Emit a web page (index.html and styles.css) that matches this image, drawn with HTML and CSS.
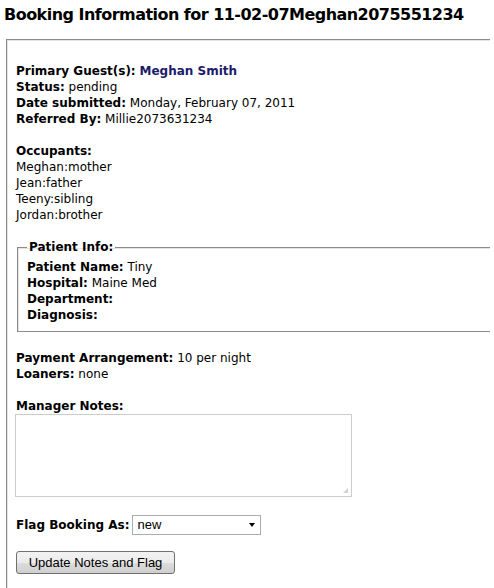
FILE: index.html
```html
<!DOCTYPE html>
<html>
<head>
<meta charset="utf-8">
<link rel="stylesheet" href="styles.css">
</head>
<body>
<h2 class="title">Booking Information for 11-02-07Meghan2075551234</h2>
<form class="booking">
  <fieldset class="outer">
    <div class="block">
      <div><b>Primary Guest(s):</b> <b class="guest">Meghan Smith</b></div>
      <div><b>Status:</b> pending</div>
      <div><b>Date submitted:</b> Monday, February 07, 2011</div>
      <div><b>Referred By:</b> Millie2073631234</div>
    </div>
    <div class="block">
      <div><b>Occupants:</b></div>
      <div>Meghan:mother</div>
      <div>Jean:father</div>
      <div>Teeny:sibling</div>
      <div>Jordan:brother</div>
    </div>
    <fieldset class="inner">
      <legend>Patient Info:</legend>
      <div><b>Patient Name:</b> Tiny</div>
      <div><b>Hospital:</b> Maine Med</div>
      <div><b>Department:</b></div>
      <div><b>Diagnosis:</b></div>
    </fieldset>
    <div class="block">
      <div><b>Payment Arrangement:</b> 10 per night</div>
      <div><b>Loaners:</b> none</div>
    </div>
    <div class="notes">
      <div><b>Manager Notes:</b></div>
      <div class="ta"></div>
    </div>
    <div class="flag">
      <b>Flag Booking As:</b>
      <div class="select"><span>new</span><span class="arrow"></span></div>
    </div>
    <div class="btn">Update Notes and Flag</div>
  </fieldset>
</form>
</body>
</html>
```
FILE: styles.css
```css
html { overflow: hidden; }
body {
  margin: 0 4px;
  font-family: "DejaVu Sans", Verdana, sans-serif;
  font-size: 12px;
  line-height: 16px;
  color: #000;
  background: #fff;
}
.title {
  margin: 0;
  padding-top: 5px;
  font-size: 16px;
  line-height: 19px;
  font-weight: bold;
  letter-spacing: -0.53px;
}
.booking { margin: 0; }
.outer {
  margin: 15px 0 0 2px;
  width: 520px;
  border: 1px solid #8a8a8a;
  box-shadow: inset 1px 1px 0 #e4e4e4;
  padding: 23px 8px 0 9px;
}
.block { margin-bottom: 16px; }
.guest { color: #1b1b6b; }
.inner {
  margin: 0 0 0 1px;
  width: 520px;
  border: 1px solid #8a8a8a;
  box-shadow: inset 1px 1px 0 #e4e4e4;
  padding: 4px 8px 8px 9px;
}
.inner legend {
  padding: 0 2px;
  font-weight: bold;
}
.inner + .block { margin-top: 18px; }
.notes { margin-bottom: 18px; }
.ta {
  margin-top: 0;
  margin-left: -1px;
  width: 335px;
  height: 81px;
  border: 1px solid #cccccc;
  position: relative;
}
.ta::after {
  content: "";
  position: absolute;
  right: 3px;
  bottom: 3px;
  width: 5px;
  height: 5px;
  background:
    radial-gradient(circle, #9a9a9a 0.6px, transparent 0.8px) 0 0 / 2px 2px;
  clip-path: polygon(100% 0, 100% 100%, 0 100%);
}
.flag {
  display: flex;
  align-items: center;
  gap: 3px;
  height: 20px;
}
.select {
  height: 18px;
  border: 1px solid #a8adb3;
  display: flex;
  align-items: center;
  justify-content: space-between;
  padding: 0 5px 0 4px;
  box-sizing: content-box;
  width: 118px;
  font-family: "Liberation Sans", Arial, sans-serif;
  font-size: 13px;
  font-weight: normal;
}
.arrow {
  width: 0;
  height: 0;
  border-left: 3.5px solid transparent;
  border-right: 3.5px solid transparent;
  border-top: 4px solid #000;
}
.btn {
  margin-top: 16px;
  margin-bottom: 14px;
  width: 157px;
  height: 21px;
  border: 1px solid #707070;
  border-radius: 3px;
  background: linear-gradient(#f2f2f2 0%, #ebebeb 50%, #dddddd 50%, #cfcfcf 100%);
  font-family: "Liberation Sans", Arial, sans-serif;
  font-size: 13px;
  line-height: 21px;
  text-align: center;
  color: #000;
  box-sizing: content-box;
}
```
